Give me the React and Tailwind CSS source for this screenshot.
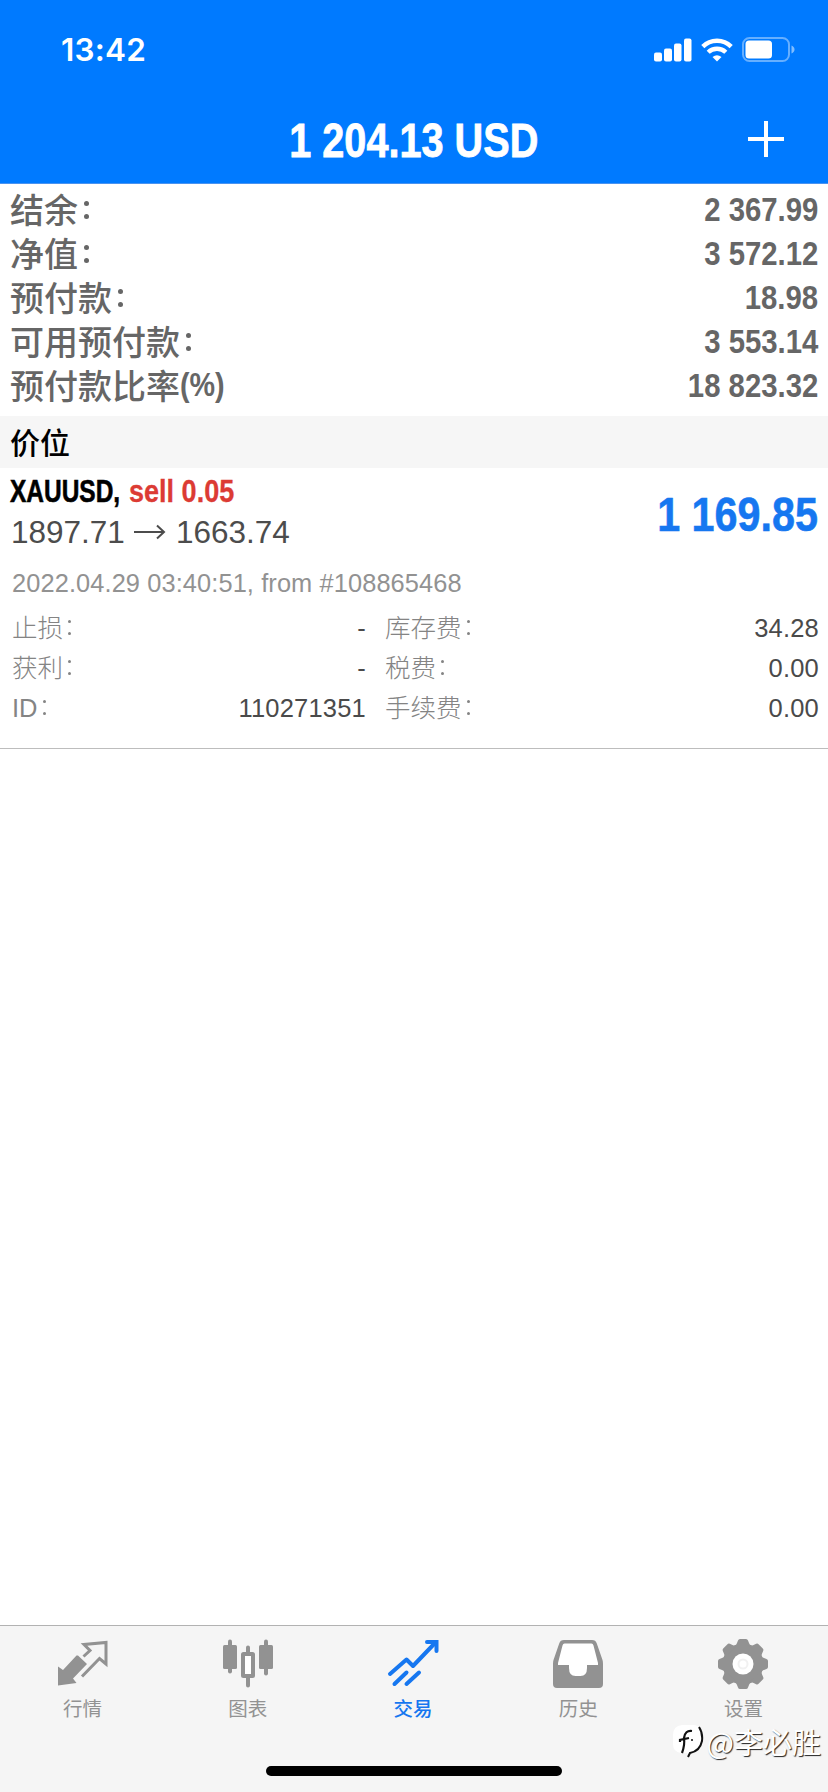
import React from 'react';
import clsx from 'clsx';

const summary = [
    { label: '结余', colon: true, value: '2 367.99' },
    { label: '净值', colon: true, value: '3 572.12' },
    { label: '预付款', colon: true, value: '18.98' },
    { label: '可用预付款', colon: true, value: '3 553.14' },
    { label: '预付款比率', suffix: '(%)', value: '18 823.32' },
];

const details = [
    { left: '止损', leftValue: '-', right: '库存费', rightValue: '34.28' },
    { left: '获利', leftValue: '-', right: '税费', rightValue: '0.00' },
    { left: 'ID', leftValue: '110271351', right: '手续费', rightValue: '0.00' },
];

const QuotesIcon = () => (
    <svg width="52" height="52" viewBox="0 0 52 52" fill="none">
        <path d="M1 47.5V28.5L6 32L19.5 17.500L21 17.500L30 26L16 40.5L19.500 45Z" fill="#929292" />
        <path d="M26.5 18.500L33 12.500L27 6.5L49 4.500V26L42.500 20.5L25 38.5" stroke="#929292" strokeWidth="3" />
    </svg>
);

const ChartIcon = () => (
    <svg width="52" height="52" viewBox="0 0 52 52" fill="none">
        <g stroke="#929292" strokeWidth="4" strokeLinecap="round">
            <path d="M8 3.500V33.500" />
            <path d="M44 3.500V35.500" />
            <path d="M26 9.500V16M26 40V47.500" />
        </g>
        <rect x="1" y="7" width="14" height="24" rx="1.500" fill="#929292" />
        <rect x="37" y="7" width="14" height="24" rx="1.500" fill="#929292" />
        <rect x="21" y="16" width="10" height="22" rx="0.5" fill="#fff" stroke="#929292" strokeWidth="4" />
    </svg>
);

const TradeIcon = () => (
    <svg width="52" height="52" viewBox="0 0 52 52" fill="none" stroke="#1677f0" strokeWidth="4" strokeLinecap="round">
        <path d="M3 36L19.500 21.500L26 28L48 5" strokeLinejoin="round" />
        <path d="M40 4H49.500V13" />
        <path d="M19.500 34.500L7.500 46M32 34.500L19.500 46" />
    </svg>
);

const HistoryIcon = () => (
    <svg width="52" height="52" viewBox="0 0 52 52" fill="none">
        <path
            d="M12 2H40C42.500 2 44 3 44.800 5.500L50.500 22Q51 23.500 51 26V46Q51 50 47 50H5Q1 50 1 46V26Q1 23.500 1.500 22L7.200 5.500C8 3 9.500 2 12 2Z"
            fill="#929292"
        />
        <path d="M12.500 5.500H39.500Q41 5.500 41.500 7.500L46 25V27H35V30Q35 38 28.500 38H23.500Q17 38 17 30V27H6V25L10.500 7.500Q11 5.500 12.500 5.500Z" fill="#fff" />
    </svg>
);

const SettingsIcon = () => (
    <svg width="52" height="52" viewBox="0 0 52 52" fill="#929292">
        <circle cx="26" cy="26" r="20.500" />
        {[0, 45, 90, 135, 180, 225, 270, 315].map((angle) => (
            <path
                key={angle}
                d="M17 8.500Q19.500 7.500 20 5L21 2.500Q21.500 1 23 1H29Q30.500 1 31 2.500L32 5Q32.500 7.500 35 8.500Z"
                transform={`rotate(${angle} 26 26)`}
            />
        ))}
        <circle cx="26" cy="26" r="10.500" fill="#fff" />
        <circle cx="26" cy="26" r="4.500" fill="none" stroke="#f1f1f1" strokeWidth="2" />
    </svg>
);

const tabs = [
    { label: '行情', icon: QuotesIcon },
    { label: '图表', icon: ChartIcon },
    { label: '交易', icon: TradeIcon, active: true },
    { label: '历史', icon: HistoryIcon },
    { label: '设置', icon: SettingsIcon },
];

const StatusBar = () => (
    <div className="flex h-[96px] items-center justify-between pl-[61px] pr-[33px] pt-[3px]">
        <span className="font-['Inter',sans-serif] text-[31.500px] font-semibold leading-none tracking-[0.2px]">13:42</span>
        <div className="flex items-center gap-[9px]">
            <svg width="38" height="24" viewBox="0 0 38 24" fill="#fff">
                <rect x="0" y="14.500" width="8" height="9" rx="2" />
                <rect x="10" y="10.500" width="8" height="13" rx="2" />
                <rect x="20" y="5.500" width="7.500" height="18" rx="2" />
                <rect x="30" y="0.500" width="7.500" height="23" rx="2" />
            </svg>
            <svg width="32" height="24" viewBox="0 0 32 24" fill="none" stroke="#fff" strokeWidth="4.400">
                <path d="M1.800 8.600C9.500 0.800 22.500 0.800 30.200 8.600" />
                <path d="M7.200 14.300C12 9.600 20 9.600 24.800 14.300" />
                <path d="M16 23.500L11.500 19Q16 15.300 20.500 19Z" fill="#fff" stroke="none" />
            </svg>
            <svg width="53" height="25" viewBox="0 0 53 25" fill="none">
                <rect x="1" y="1" width="46" height="23" rx="6.500" stroke="#fff" strokeOpacity="0.4" strokeWidth="2" />
                <rect x="3.500" y="3.500" width="26.500" height="18" rx="3.500" fill="#fff" />
                <path d="M49.500 8.500C53.500 10 53.500 15 49.500 16.500Z" fill="#fff" fillOpacity="0.5" />
            </svg>
        </div>
    </div>
);

// Colon that sits in the middle of the line next to the Chinese label
const Colon = ({ big }) => (
    <span className={clsx('inline-flex flex-col', big ? 'ml-[6px] gap-[8px] pt-[1px]' : 'ml-[5px] gap-[9px] pb-[1px]')}>
        <i className={clsx('rounded-full bg-current', big ? 'size-[5px]' : 'size-[3px]')} />
        <i className={clsx('rounded-full bg-current', big ? 'size-[5px]' : 'size-[3px]')} />
    </span>
);

const App = () => {
    return (
        <div className="flex h-[1792px] w-[828px] flex-col overflow-hidden bg-white font-['Liberation_Sans','Noto_Sans_CJK_SC',sans-serif]">
            {/* Header */}
            <header className="h-[184px] shrink-0 border-b border-[#4a93f0] bg-[#007aff] text-white">
                <StatusBar />
                <div className="grid h-[87px] grid-cols-[1fr_auto_1fr] items-center">
                    <span />
                    <h1 className="origin-center scale-x-[0.826] pt-[2px] text-[48px] font-bold leading-none [-webkit-text-stroke:0.8px]">
                        1 204.13 USD
                    </h1>
                    <svg className="mb-[1px] mr-[43px] justify-self-end" width="38" height="38" viewBox="0 0 38 38" stroke="#fff" strokeWidth="4">
                        <path d="M19 1V37M1 19H37" />
                    </svg>
                </div>
            </header>

            {/* Account summary */}
            <div className="h-[232px] shrink-0 px-[10px] pt-[3px] text-[#666]">
                {summary.map((row) => (
                    <div key={row.label} className="flex h-[44px] items-center justify-between">
                        <div className="flex items-center font-['Noto_Sans_CJK_SC',sans-serif] text-[34px] font-medium leading-[44px]">
                            {row.label}
                            {row.colon && <Colon big />}
                            {row.suffix && (
                                <span className="origin-left scale-x-[0.87] font-['Liberation_Sans'] text-[33px] font-bold">
                                    {row.suffix}
                                </span>
                            )}
                        </div>
                        <span className="origin-right scale-x-[0.862] text-[34px] font-bold leading-[40px]">{row.value}</span>
                    </div>
                ))}
            </div>

            {/* Section title */}
            <div className="flex h-[52px] shrink-0 items-center bg-[#f6f6f6] px-[10px] pb-[2px] font-['Noto_Sans_CJK_SC',sans-serif] text-[30px] font-medium text-black">
                价位
            </div>

            {/* Position */}
            <div className="h-[281px] shrink-0 border-b border-[#bdbdbd] pl-[12px] pr-[9px]">
                <div className="flex h-[96px] justify-between">
                    <div>
                        <p className="-ml-[2px] mt-[5px] flex text-[32px] font-bold leading-[36px]">
                            <span className="w-[119px] origin-left scale-x-[0.765] text-black [-webkit-text-stroke:0.6px]">XAUUSD,</span>
                            <span className="w-max origin-left scale-x-[0.845] whitespace-pre text-[#dc3b34] [-webkit-text-stroke:0.3px]">sell 0.05</span>
                        </p>
                        <p className="-ml-[1px] mt-[5px] flex items-center text-[31.500px] leading-[36px] text-[#4c4c4c]">
                            1897.71
                            <svg className="mx-[9.500px]" width="32" height="16" viewBox="0 0 32 16" fill="none" stroke="#4c4c4c" strokeWidth="2">
                                <path d="M0 8H30M23 1.500L30 8L23 14.500" />
                            </svg>
                            1663.74
                        </p>
                    </div>
                    <span className="mr-[1px] mt-[21px] origin-right scale-x-[0.86] text-[48px] font-bold leading-[52px] text-[#1677f0] [-webkit-text-stroke:0.6px]">
                        1 169.85
                    </span>
                </div>
                <p className="h-[44px] pt-[4px] text-[25.400px] leading-[30px] tracking-[0.1px] text-[#929292]">
                    2022.04.29 03:40:51, from #108865468
                </p>
                {details.map((row) => (
                    <div key={row.left} className="grid h-[40px] grid-cols-[354px_1fr] items-center gap-[19px] text-[25.500px] leading-[40px] text-[#4a4a4a]">
                        <div className="flex items-center justify-between">
                            <span className="flex items-center font-light text-[#848484]">
                                {row.left}
                                <Colon />
                            </span>
                            <span className="tracking-[0.2px]">{row.leftValue}</span>
                        </div>
                        <div className="flex items-center justify-between">
                            <span className="flex items-center font-light text-[#848484]">
                                {row.right}
                                <Colon />
                            </span>
                            <span className="tracking-[0.2px]">{row.rightValue}</span>
                        </div>
                    </div>
                ))}
            </div>

            <div className="flex-1" />

            {/* Bottom tabs */}
            <nav className="relative h-[167px] shrink-0 border-t border-[#b2b2b2] bg-[#f5f5f5]">
                <div className="mr-[2px] grid grid-cols-5">
                    {tabs.map(({ label, icon: Icon, active }) => (
                        <div
                            key={label}
                            className={clsx(
                                'flex flex-col items-center pt-[12px]',
                                active ? 'font-medium text-[#1677f0]' : 'text-[#929292]'
                            )}
                        >
                            <Icon />
                            <span className="mt-[4px] font-['Noto_Sans_CJK_SC',sans-serif] text-[19.500px] leading-[28px]">{label}</span>
                        </div>
                    ))}
                </div>
                <div className="absolute bottom-[16px] left-[266px] h-[10px] w-[296px] rounded-full bg-black" />

                {/* Watermark */}
                <div className="absolute right-[7px] top-[95px] flex items-center gap-[3px]">
                    <svg width="32" height="34" viewBox="0 0 32 34" fill="none">
                        <path d="M10 1H22Q31 2 31 15Q31 26 19 28L17 32L15 29H9Q1 28 1 20V11Q1 2 10 1Z" fill="#fff" />
                        <path d="M27 3Q31 9 30 17Q28 27 18 29L16 33" stroke="#111" strokeWidth="2" />
                        <path d="M10 29Q13 21 12 14Q13 6 20 7M8 18V16L17 14" stroke="#111" strokeWidth="2.200" />
                        <circle cx="20" cy="16" r="1" fill="#111" />
                    </svg>
                    <span className="font-['Noto_Sans_CJK_SC',sans-serif] text-[29px] leading-[40px] text-white [text-shadow:1px_1px_1px_#222]">
                        @李必胜
                    </span>
                </div>
            </nav>
        </div>
    );
};

export default App;
